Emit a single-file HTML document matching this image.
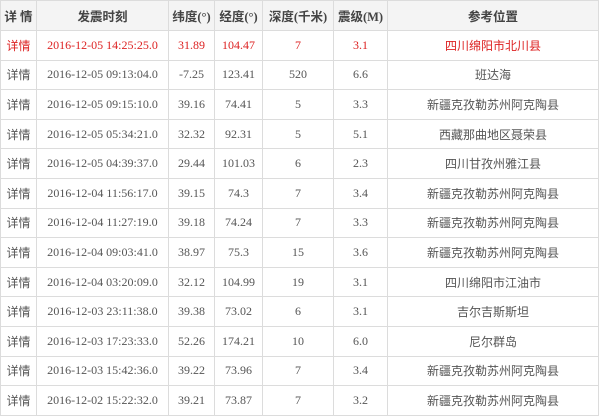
<!DOCTYPE html>
<html><head><meta charset="utf-8"><style>
body{margin:0;background:#fff;width:600px;height:417px;overflow:hidden}
table{position:absolute;left:0;top:0;border-collapse:collapse;table-layout:fixed;width:598px;font-family:"Liberation Serif","Noto Sans CJK SC",serif;font-size:12px;color:#555}
td,th{border:1px solid #dcdcdc;text-align:center;padding:0;height:28.6px;white-space:nowrap;overflow:hidden}
th{background:#f4f4f4;height:29px;font-family:"Liberation Serif","Noto Sans CJK SC",serif;font-weight:bold;color:#444;font-size:12.5px}
td.c{font-family:"Liberation Sans","Noto Sans CJK SC",sans-serif;font-size:12px}
tr.r td{color:#d22}
</style></head><body>
<table>
<colgroup><col style="width:36px"><col style="width:132px"><col style="width:46px"><col style="width:48px"><col style="width:71px"><col style="width:54px"><col style="width:211px"></colgroup>
<tr><th>详 情</th><th>发震时刻</th><th>纬度(°)</th><th>经度(°)</th><th>深度(千米)</th><th>震级(M)</th><th>参考位置</th></tr>
<tr class="r"><td class="c">详情</td><td>2016-12-05 14:25:25.0</td><td>31.89</td><td>104.47</td><td>7</td><td>3.1</td><td class="c">四川绵阳市北川县</td></tr>
<tr><td class="c">详情</td><td>2016-12-05 09:13:04.0</td><td>-7.25</td><td>123.41</td><td>520</td><td>6.6</td><td class="c">班达海</td></tr>
<tr><td class="c">详情</td><td>2016-12-05 09:15:10.0</td><td>39.16</td><td>74.41</td><td>5</td><td>3.3</td><td class="c">新疆克孜勒苏州阿克陶县</td></tr>
<tr><td class="c">详情</td><td>2016-12-05 05:34:21.0</td><td>32.32</td><td>92.31</td><td>5</td><td>5.1</td><td class="c">西藏那曲地区聂荣县</td></tr>
<tr><td class="c">详情</td><td>2016-12-05 04:39:37.0</td><td>29.44</td><td>101.03</td><td>6</td><td>2.3</td><td class="c">四川甘孜州雅江县</td></tr>
<tr><td class="c">详情</td><td>2016-12-04 11:56:17.0</td><td>39.15</td><td>74.3</td><td>7</td><td>3.4</td><td class="c">新疆克孜勒苏州阿克陶县</td></tr>
<tr><td class="c">详情</td><td>2016-12-04 11:27:19.0</td><td>39.18</td><td>74.24</td><td>7</td><td>3.3</td><td class="c">新疆克孜勒苏州阿克陶县</td></tr>
<tr><td class="c">详情</td><td>2016-12-04 09:03:41.0</td><td>38.97</td><td>75.3</td><td>15</td><td>3.6</td><td class="c">新疆克孜勒苏州阿克陶县</td></tr>
<tr><td class="c">详情</td><td>2016-12-04 03:20:09.0</td><td>32.12</td><td>104.99</td><td>19</td><td>3.1</td><td class="c">四川绵阳市江油市</td></tr>
<tr><td class="c">详情</td><td>2016-12-03 23:11:38.0</td><td>39.38</td><td>73.02</td><td>6</td><td>3.1</td><td class="c">吉尔吉斯斯坦</td></tr>
<tr><td class="c">详情</td><td>2016-12-03 17:23:33.0</td><td>52.26</td><td>174.21</td><td>10</td><td>6.0</td><td class="c">尼尔群岛</td></tr>
<tr><td class="c">详情</td><td>2016-12-03 15:42:36.0</td><td>39.22</td><td>73.96</td><td>7</td><td>3.4</td><td class="c">新疆克孜勒苏州阿克陶县</td></tr>
<tr><td class="c">详情</td><td>2016-12-02 15:22:32.0</td><td>39.21</td><td>73.87</td><td>7</td><td>3.2</td><td class="c">新疆克孜勒苏州阿克陶县</td></tr>
</table>
</body></html>
